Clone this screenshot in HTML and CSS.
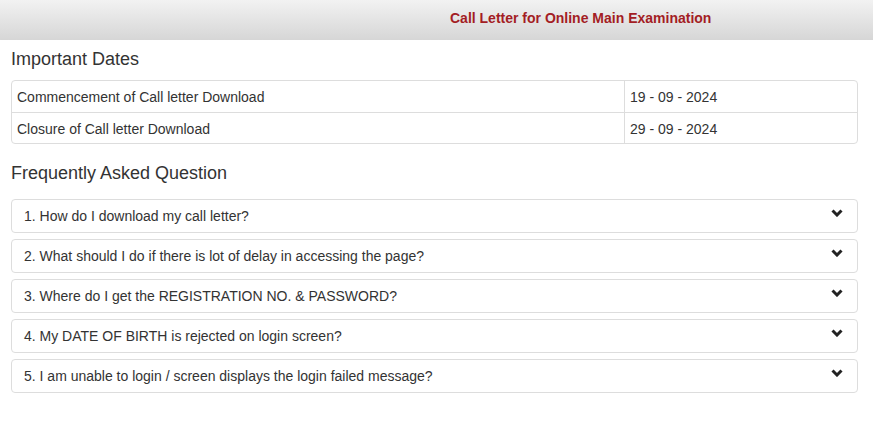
FILE: index.html
```html
<!DOCTYPE html>
<html lang="en">
<head>
    <meta charset="UTF-8">
    <title>Call Letter for Online Main Examination</title>
    <link rel="stylesheet" href="styles.css">
</head>
<body>
    <div class="header">
        <h1 class="title">Call Letter for Online Main Examination</h1>
    </div>
    <div class="content">
        <h2 class="heading">Important Dates</h2>
        <div class="dates">
            <div class="row">
                <div class="cell">Commencement of Call letter Download</div>
                <div class="cell date">19 - 09 - 2024</div>
            </div>
            <div class="row">
                <div class="cell">Closure of Call letter Download</div>
                <div class="cell date">29 - 09 - 2024</div>
            </div>
        </div>

        <h2 class="heading faq-heading">Frequently Asked Question</h2>
        <div class="faq">
            <div class="panel">
                <span>1. How do I download my call letter?</span>
                <svg class="chev" viewBox="0 0 12 8" width="12" height="8"><path d="M1.5 1.5 L6 6 L10.5 1.5" fill="none" stroke="#222" stroke-width="3"/></svg>
            </div>
            <div class="panel">
                <span>2. What should I do if there is lot of delay in accessing the page?</span>
                <svg class="chev" viewBox="0 0 12 8" width="12" height="8"><path d="M1.5 1.5 L6 6 L10.5 1.5" fill="none" stroke="#222" stroke-width="3"/></svg>
            </div>
            <div class="panel">
                <span>3. Where do I get the REGISTRATION NO. &amp; PASSWORD?</span>
                <svg class="chev" viewBox="0 0 12 8" width="12" height="8"><path d="M1.5 1.5 L6 6 L10.5 1.5" fill="none" stroke="#222" stroke-width="3"/></svg>
            </div>
            <div class="panel">
                <span>4. My DATE OF BIRTH is rejected on login screen?</span>
                <svg class="chev" viewBox="0 0 12 8" width="12" height="8"><path d="M1.5 1.5 L6 6 L10.5 1.5" fill="none" stroke="#222" stroke-width="3"/></svg>
            </div>
            <div class="panel">
                <span>5. I am unable to login / screen displays the login failed message?</span>
                <svg class="chev" viewBox="0 0 12 8" width="12" height="8"><path d="M1.5 1.5 L6 6 L10.5 1.5" fill="none" stroke="#222" stroke-width="3"/></svg>
            </div>
        </div>
    </div>
</body>
</html>
```

FILE: styles.css
```css
* {
    margin: 0;
    padding: 0;
    box-sizing: border-box;
}

body {
    font-family: "Liberation Sans", Arial, sans-serif;
    font-size: 14px;
    color: #333;
    background: #fff;
}

.header {
    height: 40px;
    background: linear-gradient(#f2f2f2, #d6d6d6);
    display: flex;
    align-items: center;
    padding-left: 450px;
}

.title {
    font-size: 14px;
    font-weight: bold;
    color: #a31d24;
    margin-top: -4px;
}

.content {
    padding: 0 15px 0 11px;
}

.heading {
    font-size: 18px;
    font-weight: normal;
    line-height: 20px;
    margin-top: 9px;
    margin-bottom: 11px;
}

.faq-heading {
    margin-top: 19px;
    margin-bottom: 16px;
}

.dates {
    border: 1px solid #ddd;
    border-radius: 4px;
}

.row {
    display: grid;
    grid-template-columns: 612px 1fr;
    height: 31px;
}

.row + .row {
    border-top: 1px solid #ddd;
}

.cell {
    padding: 1px 5px 0;
    line-height: 30px;
}

.date {
    border-left: 1px solid #ddd;
}

.faq {
    display: flex;
    flex-direction: column;
    gap: 6px;
}

.panel {
    height: 34px;
    border: 1px solid #ddd;
    border-radius: 4px;
    display: flex;
    justify-content: space-between;
    align-items: center;
    padding: 0 14px 0 12px;
}

.chev {
    margin-top: -7px;
}
```
